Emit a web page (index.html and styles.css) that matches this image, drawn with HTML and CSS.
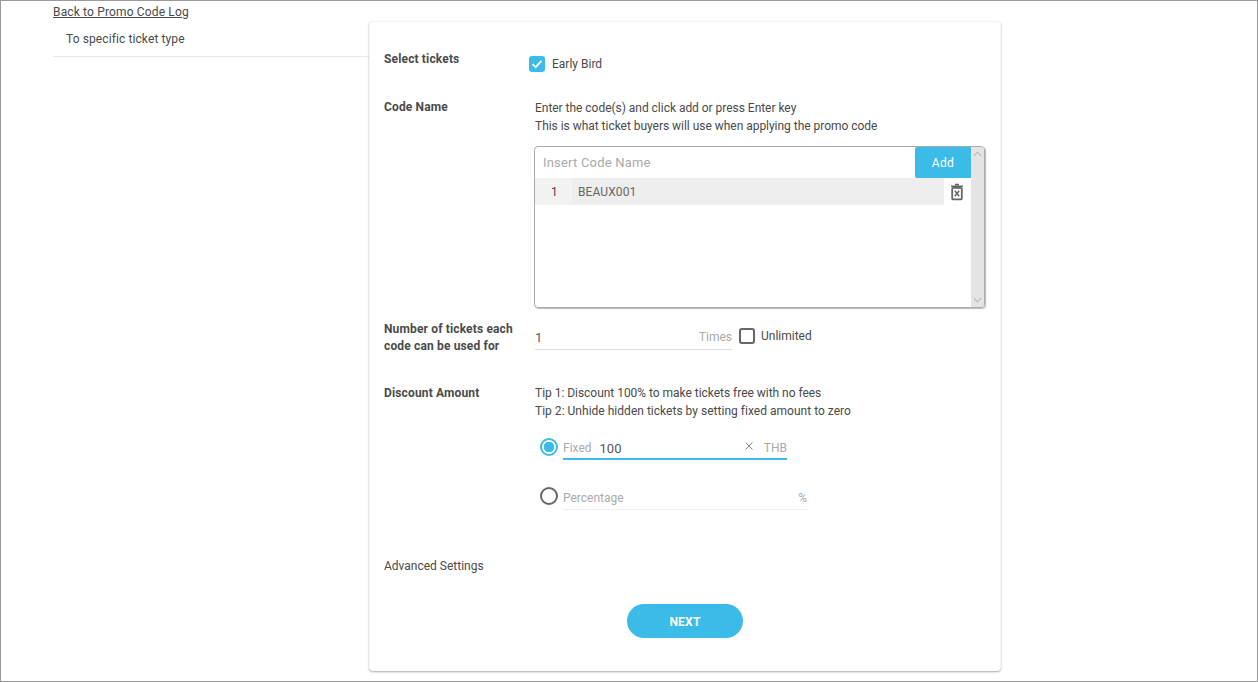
FILE: index.html
```html
<!DOCTYPE html>
<html lang="en">
<head>
<meta charset="utf-8">
<title>Promo Code</title>
<link rel="stylesheet" href="styles.css">
</head>
<body>
<div class="frame">
  <aside class="side">
    <a class="back" href="#">Back to Promo Code Log</a>
    <div class="side-item">To specific ticket type</div>
  </aside>
  <main class="card">
    <section class="row row-select">
      <div class="label">Select tickets</div>
      <label class="check-line">
        <span class="check checked"><svg width="12" height="12" viewBox="0 0 12 12"><path d="M1.5 6.2 4.6 9.2 10.5 2.8" fill="none" stroke="#fff" stroke-width="1.7"/></svg></span>
        <span class="check-text">Early Bird</span>
      </label>
    </section>
    <section class="row row-code">
      <div class="label">Code Name</div>
      <div class="body">
        <p class="text">Enter the code(s) and click add or press Enter key</p>
        <p class="text">This is what ticket buyers will use when applying the promo code</p>
        <div class="codebox">
          <div class="codes">
            <div class="code-input">
              <span class="placeholder">Insert Code Name</span>
              <button class="add">Add</button>
            </div>
            <div class="code-row">
              <span class="code-num">1</span>
              <span class="code-val">BEAUX001</span>
              <svg class="trash" width="14" height="18" viewBox="0 0 14 18"><path d="M5 1.5h4M1 3.2h12" stroke="#666" stroke-width="1.4" fill="none"/><rect x="2.2" y="4.8" width="9.6" height="11.6" rx="1" fill="none" stroke="#666" stroke-width="1.8"/><path d="M4.8 7.8l4.4 5.4M9.2 7.8l-4.4 5.4" stroke="#666" stroke-width="1.5" fill="none"/></svg>
            </div>
          </div>
          <div class="scroll">
            <svg width="13" height="8" viewBox="0 0 14 8"><path d="M3 6l4-4 4 4" fill="none" stroke="#999" stroke-width="1"/></svg>
            <svg width="13" height="8" viewBox="0 0 14 8"><path d="M3 2l4 4 4-4" fill="none" stroke="#999" stroke-width="1"/></svg>
          </div>
        </div>
      </div>
    </section>
    <section class="row row-times">
      <div class="label">Number of tickets each code can be used for</div>
      <div class="times-line">
        <div class="field times-field"><span class="val">1</span><span class="unit">Times</span></div>
        <span class="check"></span>
        <span class="check-text">Unlimited</span>
      </div>
    </section>
    <section class="row row-discount">
      <div class="label discount-label">Discount Amount</div>
      <div class="body">
        <p class="text">Tip 1: Discount 100% to make tickets free with no fees</p>
        <p class="text tip-two">Tip 2: Unhide hidden tickets by setting fixed amount to zero</p>
        <div class="radio-line line-fixed">
          <span class="radio on"></span>
          <div class="field fixed-field">
            <span class="unit">Fixed</span><span class="val amount">100</span>
            <svg class="clear" width="8" height="8" viewBox="0 0 8 8"><path d="M.5.5l7 7M7.5.5l-7 7" stroke="#888" stroke-width="1" fill="none"/></svg><span class="unit">THB</span>
          </div>
        </div>
        <div class="radio-line line-pct">
          <span class="radio"></span>
          <div class="field pct-field"><span class="unit">Percentage</span><span class="unit">%</span></div>
        </div>
      </div>
    </section>
    <div class="advanced">Advanced Settings</div>
    <div class="actions"><button class="next">NEXT</button></div>
  </main>
</div>
</body>
</html>
```
FILE: styles.css
```css
* { box-sizing: border-box; }
html, body { margin: 0; height: 100%; background: #fff; }
body { font-family: Roboto, "Liberation Sans", sans-serif; font-size: 12px; color: #4a4a4a; overflow: hidden; }
p { margin: 0; }
.frame { width: 1258px; height: 682px; border: 1px solid #9a9a9a; display: flex; padding-left: 52px; align-items: flex-start; }
.side { width: 316px; flex: none; }
.back { display: block; height: 21px; padding-top: 4px; line-height: 14px; color: #4a4a4a; text-decoration: underline; font-size: 12px; letter-spacing: .15px; }
.side-item { height: 35px; padding: 9px 0 0 13px; line-height: 16px; border-bottom: 1px solid #e8e8e8; letter-spacing: .1px; }
.card { width: 632px; height: 650px; margin-top: 20px; padding: 0 14px; background: #fff; border-radius: 4px; border: 1px solid #f4f4f4; border-bottom: 0; box-shadow: 0 1px 2px rgba(0,0,0,.35); }
.row { display: grid; grid-template-columns: 151px 1fr; }
.label { font-weight: 700; line-height: 17px; width: 132px; letter-spacing: .15px; }
.discount-label { padding-top: 1px; }
.row-select { padding-top: 29px; height: 77px; }
.check-line { display: flex; align-items: center; height: 16px; margin: 5px 0 0 -6px; }
.check { width: 16px; height: 16px; flex: none; border: 2px solid #666; border-radius: 3px; display: flex; align-items: center; justify-content: center; }
.check.checked { background: #3bbbe8; border: 0; }
.check-text { margin-left: 7px; }
.text { line-height: 18px; letter-spacing: -.03px; }
.tip-two { letter-spacing: .02px; }
.codebox { width: 451px; height: 162px; margin: 11px 0 0 -1px; border: 1px solid #aaa; border-radius: 4px; display: flex; overflow: hidden; box-shadow: 1px 1px 1px #bbb; }
.codes { flex: 1; }
.code-input { height: 31px; display: flex; justify-content: space-between; align-items: center; padding-left: 8px; }
.placeholder { color: #aaa; font-size: 13px; letter-spacing: .2px; }
.add { width: 56px; height: 31px; border: 0; background: #3bbbe8; color: #fff; font: 12px Roboto, sans-serif; letter-spacing: .3px; border-radius: 2px 0 0 2px; }
.code-row { display: flex; align-items: center; height: 27px; }
.code-num { width: 37px; height: 27px; line-height: 28px; padding-left: 16px; background: #f2f2f2; }
.code-val { width: 372px; height: 27px; line-height: 28px; padding-left: 6px; background: #eee; color: #666; letter-spacing: .1px; }
.trash { margin-left: 6px; }
.scroll { width: 13px; flex: none; background: #e4e4e4; display: flex; flex-direction: column; justify-content: space-between; padding: 3px 0; }
.row-times { height: 68px; padding-top: 5px; margin-top: 8px; }
.times-line { display: flex; align-items: center; height: 30px; }
.field { display: flex; justify-content: space-between; align-items: center; }
.times-field { width: 197px; height: 24px; margin-top: 3px; border-bottom: 1px solid #ddd; }
.times-line .check { margin-left: 7px; }
.times-line .check-text { margin: 0 0 0 6px; }
.val { font-size: 13px; color: #555; }
.unit { color: #aaa; }
.row-discount { height: 174px; }
.radio-line { display: flex; align-items: flex-start; margin-left: 5px; }
.line-fixed { margin-top: 18px; }
.line-pct { margin-top: 27px; }
.radio { width: 18px; height: 18px; flex: none; border: 2px solid #666; border-radius: 50%; margin-right: 5px; }
.radio.on { border-color: #3bbbe8; background: radial-gradient(circle, #3bbbe8 0 5px, #fff 5.5px); }
.fixed-field { width: 224px; height: 27px; margin-top: -5px; padding-top: 5px; border-bottom: 2px solid #3bbbe8; justify-content: flex-start; }
.amount { margin-left: 8px; flex: 1; }
.clear { margin: 0 11px 4px 0; }
.pct-field { width: 244px; height: 24px; margin-top: -1px; border-bottom: 1px solid #eee; }
.advanced { line-height: 16px; }
.actions { display: flex; justify-content: center; margin-top: 30px; }
.next { width: 116px; height: 34px; padding-top: 2px; border: 0; border-radius: 17px; background: #3bbbe8; color: #fff; font: 700 12px Roboto, sans-serif; letter-spacing: .2px; }
```
